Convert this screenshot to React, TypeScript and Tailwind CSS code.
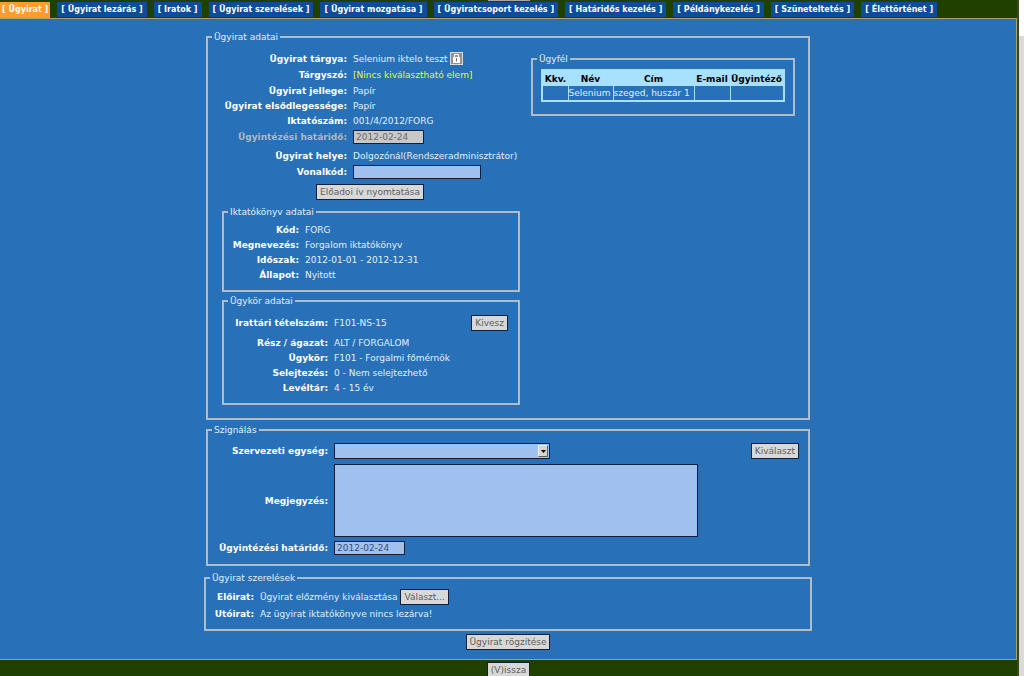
import { ReactNode } from "react";

const tabs = [
  "Ügyirat",
  "Ügyirat lezárás",
  "Iratok",
  "Ügyirat szerelések",
  "Ügyirat mozgatása",
  "Ügyiratcsoport kezelés",
  "Határidős kezelés",
  "Példánykezelés",
  "Szüneteltetés",
  "Élettörténet",
];

const bookRows = [
  ["Kód", "FORG"],
  ["Megnevezés", "Forgalom iktatókönyv"],
  ["Időszak", "2012-01-01 - 2012-12-31"],
  ["Állapot", "Nyitott"],
];

const groupRows = [
  ["Rész / ágazat", "ALT / FORGALOM"],
  ["Ügykör", "F101 - Forgalmi főmérnök"],
  ["Selejtezés", "0 - Nem selejtezhető"],
  ["Levéltár", "4 - 15 év"],
];

const inputClass =
  "h-[14px] border border-[#10203c] bg-[#a0c0f0] px-[2px] text-[#3c4f74] outline-none";

function Box({
  title,
  className,
  children,
}: {
  title: string;
  className?: string;
  children: ReactNode;
}) {
  return (
    <fieldset
      className={`min-w-0 border-2 border-[#b0bcc8] ${className || ""}`}
    >
      <legend className="ml-1 px-0.5 leading-[12px]">{title}</legend>
      {children}
    </fieldset>
  );
}

function Row({
  label,
  width,
  height = "h-[15px]",
  htmlFor,
  children,
}: {
  label: string;
  width: string;
  height?: string;
  htmlFor?: string;
  children?: ReactNode;
}) {
  const labelClass = `shrink-0 text-right font-bold text-white ${width}`;
  return (
    <div className={`flex items-center gap-[6px] whitespace-nowrap ${height}`}>
      {htmlFor ? (
        <label htmlFor={htmlFor} className={labelClass}>
          {label}:
        </label>
      ) : (
        <span className={labelClass}>{label}:</span>
      )}
      {children}
    </div>
  );
}

function Button({ children }: { children: ReactNode }) {
  return (
    <button
      type="button"
      className="flex h-4 shrink-0 items-center border border-[#10203c] bg-[#d8d8d8] px-[3px] whitespace-nowrap text-[#606060]"
    >
      {children}
    </button>
  );
}

export default function App() {
  return (
    <div className="flex min-h-screen bg-[#204000] font-['DejaVu_Sans',sans-serif] text-[9px] leading-[12px] text-[#e0f0ff]">
      <div className="flex min-w-0 flex-1 flex-col">
        <nav className="relative flex h-[18px] gap-[7px] pt-0.5">
          <div className="absolute top-0 left-[488px] h-px w-[42px] bg-[#a8a8a0]" />
          {tabs.map((tab, i) => (
            <a
              key={tab}
              href="#"
              className={`text-[8px] leading-[16px] font-bold whitespace-nowrap text-white ${
                i === 0
                  ? "h-4 bg-[#ff9c30] px-[2px]"
                  : "h-[15px] bg-[#0c4c98] px-1"
              }`}
            >
              [ {tab} ]
            </a>
          ))}
        </nav>

        <main className="flex-1 border-y border-r border-[#a8a070] bg-[#2870b8] pt-3 pb-2">
          <form className="mx-auto flex max-w-[608px] flex-col">
            <Box title="Ügyirat adatai" className="mx-[2px]">
              <div className="flex gap-[11px] pr-[13px] pb-[13px] pl-2">
                <div className="w-[304px] shrink-0 pt-[7px]">
                  <Row label="Ügyirat tárgya" width="w-[131px]" height="h-[17px]">
                    <span className="flex items-center gap-[3px]">
                      Selenium iktelo teszt
                      <button
                        type="button"
                        aria-label="Zárolás"
                        className="size-[13px] border border-[#d8dce0] bg-[#98908c]"
                      >
                        <svg viewBox="0 0 11 11" className="size-[11px]">
                          <rect x="2" y="4" width="7" height="6" fill="#fff" />
                          <path
                            d="M3.5 4V1.5H7.5V4"
                            fill="none"
                            stroke="#fff"
                          />
                          <path d="M5.5 5V8.5" stroke="#807060" />
                        </svg>
                      </button>
                    </span>
                  </Row>
                  <Row label="Tárgyszó" width="w-[131px]" height="h-4">
                    <span className="text-[#e0ff20]">
                      [Nincs kiválasztható elem]
                    </span>
                  </Row>
                  <Row label="Ügyirat jellege" width="w-[131px]">
                    Papír
                  </Row>
                  <Row label="Ügyirat elsődlegessége" width="w-[131px]">
                    Papír
                  </Row>
                  <Row label="Iktatószám" width="w-[131px]" height="h-4">
                    001/4/2012/FORG
                  </Row>
                  <div className="flex h-[19px] gap-[6px] pt-[1px] whitespace-nowrap">
                    <label
                      htmlFor="deadline"
                      className="w-[131px] shrink-0 text-right leading-[14px] font-bold text-[#b0b8c0]"
                    >
                      Ügyintézési határidő:
                    </label>
                    <input
                      id="deadline"
                      disabled
                      defaultValue="2012-02-24"
                      className="h-[14px] w-[71px] border border-[#10203c] bg-[#c8c8c8] px-[2px] text-[#686868]"
                    />
                  </div>
                  <Row label="Ügyirat helye" width="w-[131px]" height="h-4">
                    Dolgozónál(Rendszeradminisztrátor)
                  </Row>
                  <Row
                    label="Vonalkód"
                    width="w-[131px]"
                    height="h-4"
                    htmlFor="barcode"
                  >
                    <input id="barcode" className={`w-32 ${inputClass}`} />
                  </Row>
                  <div className="flex justify-center pt-1 pb-[6px] pl-1">
                    <Button>Előadoi ív nyomtatása</Button>
                  </div>

                  <Box title="Iktatókönyv adatai" className="ml-[6px]">
                    <div className="pt-1 pb-[8px]">
                      {bookRows.map(([label, value]) => (
                        <Row key={label} label={label} width="w-[75px]">
                          {value}
                        </Row>
                      ))}
                    </div>
                  </Box>

                  <Box title="Ügykör adatai" className="mt-[3px] ml-[6px]">
                    <div className="pt-[8px] pr-[10px] pb-[8px]">
                      <div className="mb-1 flex items-center justify-between">
                        <Row label="Irattári tételszám" width="w-[104px]">
                          F101-NS-15
                        </Row>
                        <Button>Kivesz</Button>
                      </div>
                      {groupRows.map(([label, value]) => (
                        <Row key={label} label={label} width="w-[104px]">
                          {value}
                        </Row>
                      ))}
                    </div>
                  </Box>
                </div>

                <div className="min-w-0 flex-1 pt-[10px]">
                  <Box title="Ügyfél">
                    <div className="px-2 pt-1 pb-3">
                      <table className="w-full table-fixed border-collapse border-2 border-[#a8e0ff] whitespace-nowrap">
                        <thead className="bg-[#a8e0ff] text-black">
                          <tr className="h-4">
                            <th className="w-[26px]">Kkv.</th>
                            <th className="w-[45px]">Név</th>
                            <th className="w-[81px]">Cím</th>
                            <th className="w-9">E-mail</th>
                            <th>Ügyintéző</th>
                          </tr>
                        </thead>
                        <tbody>
                          <tr className="h-[15px] *:border-l *:border-[#a8e0ff]">
                            <td />
                            <td>Selenium</td>
                            <td>szeged, huszár 1</td>
                            <td />
                            <td />
                          </tr>
                        </tbody>
                      </table>
                    </div>
                  </Box>
                </div>
              </div>
            </Box>

            <Box title="Szignálás" className="mx-[2px] mt-1">
              <div className="flex flex-col pt-[7px] pr-[9px] pb-[9px]">
                <div className="flex items-center justify-between">
                  <Row
                    label="Szervezeti egység"
                    width="w-[120px]"
                    height="h-4"
                    htmlFor="unit"
                  >
                    <div className="relative">
                      <select
                        id="unit"
                        className="block h-4 w-[216px] appearance-none border border-[#10203c] bg-[#a0c0f0]"
                      />
                      <span className="pointer-events-none absolute top-[2px] right-[2px] flex h-3 w-[10px] items-center justify-center border border-[#f0f0f0] border-r-[#606060] border-b-[#606060] bg-[#d8d4cc]">
                        <svg viewBox="0 0 5 3" className="h-[3px] w-[5px]">
                          <path d="M0 0H5L2.5 3Z" fill="#000" />
                        </svg>
                      </span>
                    </div>
                  </Row>
                  <Button>Kiválaszt</Button>
                </div>
                <Row
                  label="Megjegyzés"
                  width="w-[120px]"
                  height="mt-[5px]"
                  htmlFor="note"
                >
                  <textarea
                    id="note"
                    className="block h-[73px] w-[364px] resize-none border border-[#10203c] bg-[#a0c0f0] outline-none"
                  />
                </Row>
                <Row
                  label="Ügyintézési határidő"
                  width="w-[120px]"
                  height="mt-1"
                  htmlFor="signDeadline"
                >
                  <input
                    id="signDeadline"
                    defaultValue="2012-02-24"
                    className={`w-[71px] ${inputClass}`}
                  />
                </Row>
              </div>
            </Box>

            <Box title="Ügyirat szerelések" className="mt-[6px]">
              <div className="pt-1 pb-[7px]">
                <Row label="Előirat" width="w-[48px]" height="h-[18px]">
                  <span className="flex items-center gap-[3px]">
                    Ügyirat előzmény kiválasztása
                    <Button>Választ...</Button>
                  </span>
                </Row>
                <Row label="Utóirat" width="w-[48px]" height="h-4">
                  Az ügyirat iktatókönyve nincs lezárva!
                </Row>
              </div>
            </Box>

            <div className="mt-[3px] flex justify-center">
              <Button>Ügyirat rögzítése</Button>
            </div>
          </form>
        </main>

        <footer className="flex h-4 justify-center overflow-hidden pt-0.5">
          <Button>(V)issza</Button>
        </footer>
      </div>

      <div className="w-[7px] border-l-2 border-[#384820] bg-[#dcdad8]">
        <div className="h-9 bg-white" />
      </div>
    </div>
  );
}
